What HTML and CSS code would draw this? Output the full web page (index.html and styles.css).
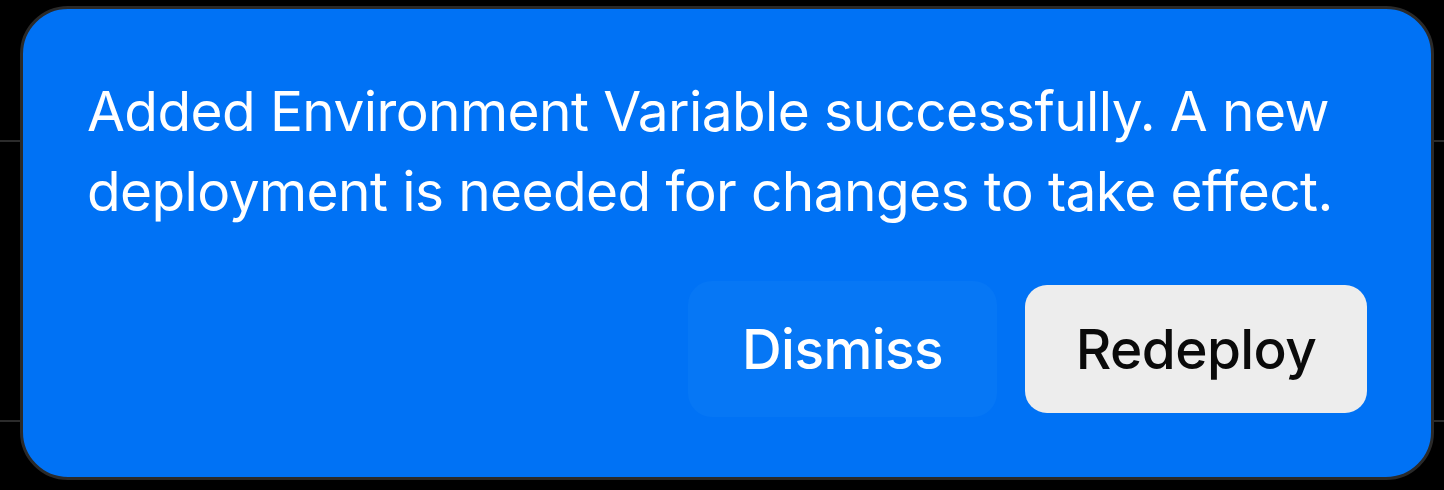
FILE: index.html
```html
<!DOCTYPE html>
<html lang="en">
<head>
<meta charset="utf-8">
<title>Toast</title>
<link rel="stylesheet" href="styles.css">
</head>
<body>
<div class="page">
  <div class="rows">
    <div class="row row-first"></div>
    <div class="row row-mid"></div>
    <div class="row row-last"></div>
  </div>
  <div class="toast" role="status">
    <p class="toast-message">Added Environment Variable successfully. A new deployment is needed for changes to take effect.</p>
    <div class="toast-actions">
      <button class="btn btn-ghost" type="button">Dismiss</button>
      <button class="btn btn-light" type="button">Redeploy</button>
    </div>
  </div>
</div>
</body>
</html>
```

FILE: styles.css
```css
* { box-sizing: border-box; }

html, body {
  margin: 0;
  padding: 0;
  background: #000;
}

body {
  font-family: Inter, "Noto Sans", "Liberation Sans", sans-serif;
  width: 1444px;
  height: 490px;
  overflow: hidden;
}

.page {
  position: relative;
  width: 1444px;
  height: 490px;
}

.rows {
  display: flex;
  flex-direction: column;
}

.row-first {
  height: 142px;
  border-bottom: 2px solid #2b2b2b;
}

.row-mid {
  height: 280px;
  border-bottom: 2px solid #2b2b2b;
}

.row-last {
  height: 68px;
}

.toast {
  position: absolute;
  left: 20px;
  top: 6px;
  width: 1414px;
  height: 474px;
  background: #0072f5;
  border: 3px solid #2a2a2a;
  border-radius: 48px;
  padding: 62px 64px 64px 64px;
  display: flex;
  flex-direction: column;
  color: #fff;
}

.toast-message {
  margin: 0;
  font-size: 55px;
  line-height: 80px;
  font-weight: 400;
  letter-spacing: -0.6px;
}

.toast-actions {
  margin-top: 54px;
  height: 128px;
  display: flex;
  justify-content: flex-end;
  align-items: center;
  gap: 28px;
}

.btn {
  font-family: inherit;
  font-size: 55px;
  font-weight: 500;
  letter-spacing: -0.6px;
  border: none;
  display: flex;
  align-items: center;
  justify-content: center;
  padding: 0;
  cursor: pointer;
  flex: none;
}

.btn-ghost {
  width: 309px;
  height: 136px;
  border-radius: 24px;
  background: #0677f5;
  color: #fff;
}

.btn-light {
  width: 342px;
  height: 128px;
  border-radius: 22px;
  background: #ededed;
  color: #0a0a0a;
}
```
